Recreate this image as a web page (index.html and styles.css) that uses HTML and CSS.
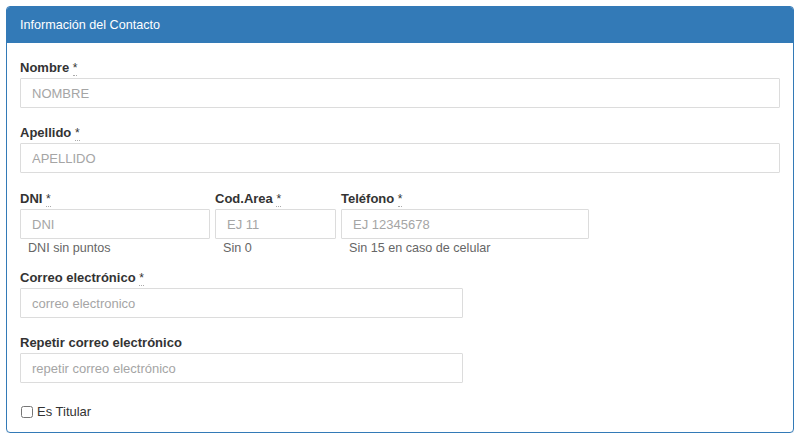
FILE: index.html
```html
<!DOCTYPE html>
<html lang="es">
<head>
  <meta charset="UTF-8">
  <title>Información del Contacto</title>
  <link rel="stylesheet" href="styles.css">
</head>
<body>
  <div class="panel">
    <div class="panel-heading">Información del Contacto</div>
    <div class="panel-body">
      <div class="form-group">
        <label for="nombre">Nombre <abbr title="requerido">*</abbr></label>
        <input type="text" id="nombre" placeholder="NOMBRE">
      </div>
      <div class="form-group">
        <label for="apellido">Apellido <abbr title="requerido">*</abbr></label>
        <input type="text" id="apellido" placeholder="APELLIDO">
      </div>

      <!-- DNI / area / phone -->
      <div class="form-row">
        <div class="col col-dni">
          <label for="dni">DNI <abbr title="requerido">*</abbr></label>
          <input type="text" id="dni" placeholder="DNI">
          <span class="help-block">DNI sin puntos</span>
        </div>
        <div class="col col-area">
          <label for="area">Cod.Area <abbr title="requerido">*</abbr></label>
          <input type="text" id="area" placeholder="EJ 11">
          <span class="help-block">Sin 0</span>
        </div>
        <div class="col col-tel">
          <label for="telefono">Teléfono <abbr title="requerido">*</abbr></label>
          <input type="text" id="telefono" placeholder="EJ 12345678">
          <span class="help-block">Sin 15 en caso de celular</span>
        </div>
      </div>

      <div class="form-group half">
        <label for="correo">Correo electrónico <abbr title="requerido">*</abbr></label>
        <input type="email" id="correo" placeholder="correo electronico">
      </div>
      <div class="form-group half">
        <label for="correo2">Repetir correo electrónico</label>
        <input type="email" id="correo2" placeholder="repetir correo electrónico">
      </div>

      <label class="checkbox"><input type="checkbox" id="titular"> Es Titular</label>
    </div>
  </div>
</body>
</html>
```

FILE: styles.css
```css
/* General styling */
body {
  font-family: "Liberation Sans", Arial, sans-serif;
  font-size: 13px;
  color: #333;
  background: #fff;
  margin: 6px;
}
.panel {
  border: 1px solid #337ab7;
  border-radius: 4px;
  box-shadow: 0 1px 1px rgba(0, 0, 0, 0.08);
  height: 427px;
  box-sizing: border-box;
}
.panel-heading {
  background-color: #337ab7;
  color: #fff;
  font-size: 12.6px;
  padding: 9px 13px;
  line-height: 18px;
  border-radius: 3px 3px 0 0;
}
.panel-body {
  padding: 16px 13px 0 13px;
}
.form-group {
  margin-bottom: 16px;
}
.form-group.half {
  width: 443px;
}
label {
  display: block;
  font-weight: bold;
  line-height: 18px;
  margin-bottom: 1px;
}
abbr {
  text-decoration: none;
  border-bottom: 1px dotted #aaa;
  font-weight: normal;
  font-size: 12px;
  cursor: help;
}
input[type="text"],
input[type="email"] {
  display: block;
  width: 100%;
  height: 30px;
  box-sizing: border-box;
  padding: 6px 11px;
  font-family: inherit;
  font-size: 13px;
  color: #555;
  border: 1px solid #dcdcdc;
  border-radius: 1px;
  margin: 0;
}
input::placeholder {
  color: #a5a5a5;
}
.form-row {
  display: flex;
  gap: 5px;
  padding-top: 1px;
  margin-bottom: 12px;
}
.col-dni {
  width: 190px;
}
.col-area {
  width: 121px;
}
.col-tel {
  width: 248px;
}
.help-block {
  display: block;
  margin-top: 1px;
  padding-left: 8px;
  line-height: 17px;
  font-size: 12.6px;
  color: #666;
}
.checkbox {
  display: flex;
  align-items: center;
  gap: 4px;
  font-weight: normal;
  margin-top: 20px;
}
.checkbox input {
  width: 12px;
  height: 12px;
  margin: 0 0 0 1px;
}
```
